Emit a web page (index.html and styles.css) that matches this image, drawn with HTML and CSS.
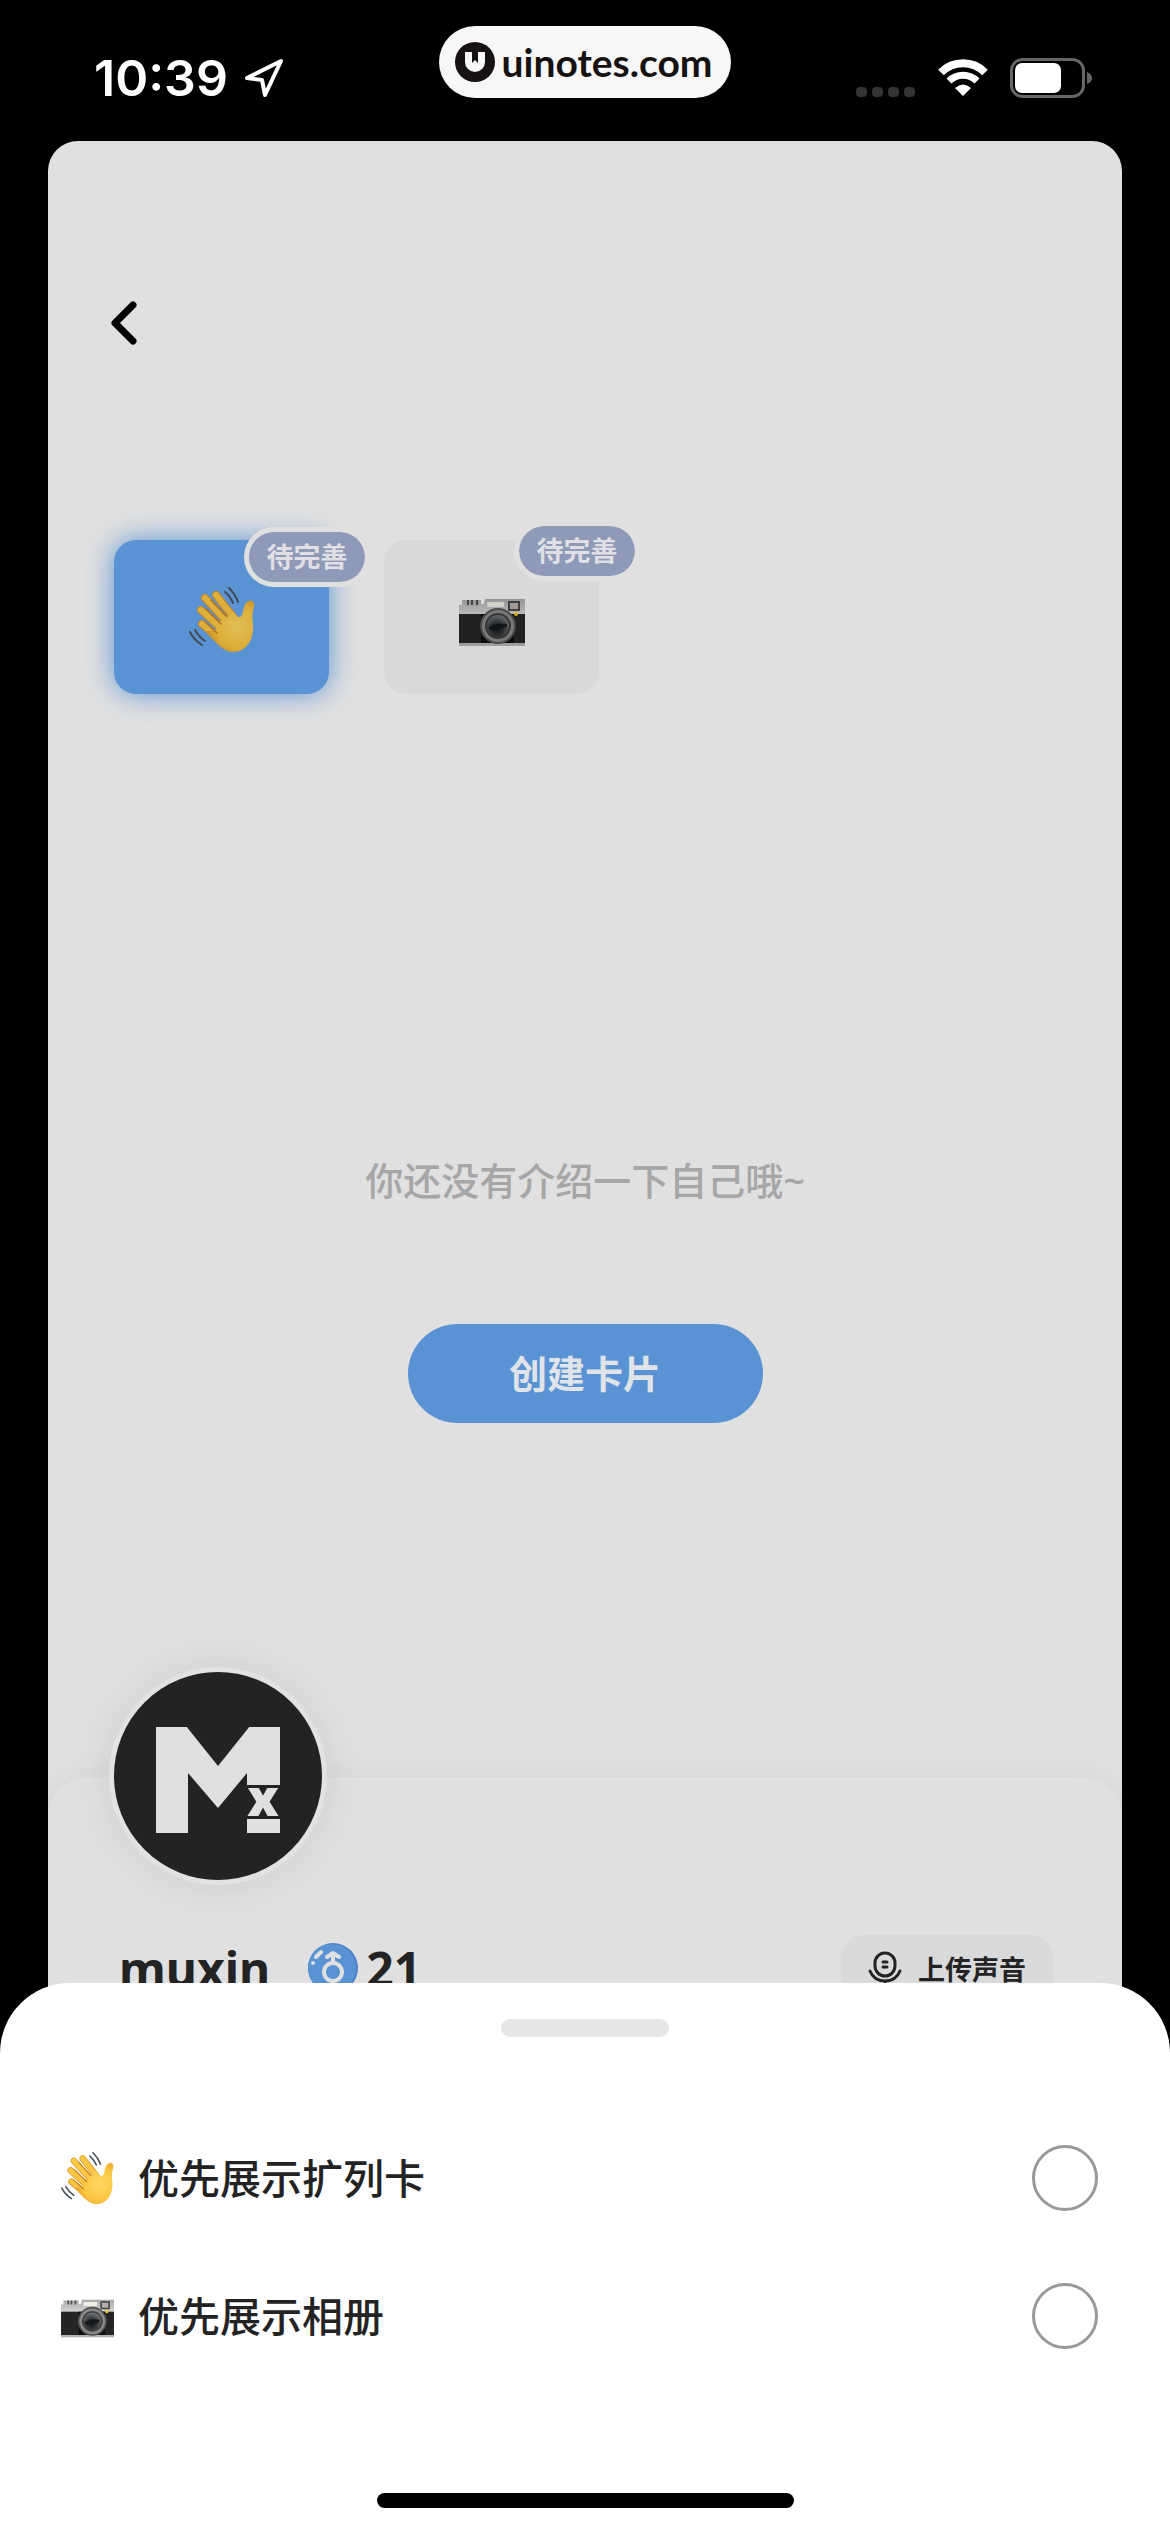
FILE: index.html
```
<!DOCTYPE html>
<html lang="zh-CN">
<head>
    <meta charset="utf-8">
    <meta name="viewport" content="width=device-width, initial-scale=1">
    <title>个人卡片</title>
    <link rel="stylesheet" href="styles.css">
</head>
<body>
    <!-- Общие иконки -->
    <svg class="sprite" aria-hidden="true">
        <defs>
            <radialGradient id="skin" cx="0.65" cy="0.5" r="0.6">
                <stop offset="0" stop-color="#ffd964"/>
                <stop offset="0.7" stop-color="#fbc540"/>
                <stop offset="1" stop-color="#e8a42c"/>
            </radialGradient>
            <linearGradient id="metal" x1="0" y1="0" x2="0" y2="1">
                <stop offset="0" stop-color="#a9a9a9"/>
                <stop offset="1" stop-color="#dadada"/>
            </linearGradient>
            <radialGradient id="glass" cx="0.45" cy="0.65" r="0.6">
                <stop offset="0" stop-color="#161819"/>
                <stop offset="0.5" stop-color="#33373a"/>
                <stop offset="1" stop-color="#6b6f71"/>
            </radialGradient>
        </defs>
        <symbol id="wave" viewBox="0 0 66 66">
            <g fill="none" stroke="#dd982a" stroke-width="8" stroke-linecap="round">
                <path d="M13 37 31 52"/>
                <path d="M12 23 34 43"/>
                <path d="M16 11 38 35"/>
                <path d="M27 8 46 32"/>
            </g>
            <g fill="none" stroke="#fcc843" stroke-width="6" stroke-linecap="round">
                <path d="M13 37 31 52"/>
                <path d="M12 23 34 43"/>
                <path d="M16 11 38 35"/>
                <path d="M27 8 46 32"/>
            </g>
            <path fill="url(#skin)" d="M43 24 48 29C51 32 53 29 54 25 55 20 56 15 60 14 64 13 66 16 65 20 63 26 63 31 64 38 65 53 57 65 44 65 35 65 28 57 16 44L26 44 30 34 37 32Z"/>
            <g fill="none" stroke="#c98220" stroke-width="1.500" stroke-linecap="round">
                <path d="M16 35 28 46"/>
                <path d="M17 22 32 37"/>
                <path d="M22 13 37 29"/>
            </g>
            <g fill="none" stroke="#4c535b" stroke-width="2" stroke-linecap="round">
                <path d="M36 5Q41 9 44 16"/>
                <path d="M40 1Q46 7 49 15"/>
                <path d="M1 45Q5 53 13 58"/>
                <path d="M6 43Q10 50 16 54"/>
            </g>
        </symbol>
        <symbol id="camera" viewBox="0 -12 66 66">
            <path fill="url(#metal)" d="M0 6H3V1H22V5H25L26 0H66V17H0Z"/>
            <path fill="#4c4c4c" d="M8 1H10V6H8ZM12 1H14V6H12ZM17 1H19V6H17Z"/>
            <rect y="15" width="66" height="30" fill="#252525"/>
            <rect x="22" y="15" width="33" height="30" fill="#0c0c0c"/>
            <rect y="44" width="66" height="3" fill="#b4b4b4"/>
            <rect x="28" y="3" width="17" height="5" rx="1" fill="#efeee4"/>
            <rect x="49" y="2" width="12" height="10" fill="#484848"/>
            <rect x="51" y="4" width="8" height="6" fill="#b8aea7"/>
            <circle cx="39" cy="27" r="18" fill="#535353"/>
            <circle cx="39" cy="27" r="16" fill="#8a8a8a"/>
            <circle cx="39" cy="27" r="13" fill="#3d3d3d"/>
            <circle cx="39" cy="27" r="11" fill="url(#glass)"/>
            <path fill="#171819" d="M30 28Q36 23 48 25 49 29 41 30 36 33 30 30Z"/>
            <circle cx="57" cy="15" r="2" fill="#f3c925"/>
        </symbol>
    </svg>

    <div class="screen">
        <header class="status-bar">
            <div class="status-left">
                <span class="time">10:39</span>
                <svg width="40" height="40" viewBox="0 0 40 40" fill="none" stroke="#fff" stroke-width="4" stroke-linejoin="round">
                    <path d="M37 3 3 20 18 22 21 37Z"/>
                </svg>
            </div>
            <div class="brand">
                <svg width="40" height="40" viewBox="0 0 40 40">
                    <circle cx="20" cy="20" r="20" fill="#161212"/>
                    <path fill="#f7f7f7" d="M10 10H17V21L20 18 23 21V10H30V20A10 10 0 0 1 10 20Z"/>
                </svg>
                <span>uinotes.com</span>
            </div>
            <div class="status-right">
                <svg class="signal" width="60" height="12" viewBox="0 0 60 12" fill="#333">
                    <rect y="1" width="11" height="10" rx="4"/>
                    <rect x="16" y="1" width="11" height="10" rx="4"/>
                    <rect x="32" y="1" width="11" height="10" rx="4"/>
                    <rect x="48" y="1" width="11" height="10" rx="4"/>
                </svg>
                <svg width="50" height="38" viewBox="0 0 50 38" fill="none" stroke="#fff">
                    <path stroke-width="8" d="M3 13.500A31 31 0 0 1 47 13.500"/>
                    <path stroke-width="7" d="M11 22A20 20 0 0 1 39 22"/>
                    <path fill="#fff" stroke="none" d="M25 37 17 29Q25 22 33 29Z"/>
                </svg>
                <svg width="82" height="40" viewBox="0 0 82 40">
                    <rect x="1.500" y="1.500" width="72" height="37" rx="11" fill="none" stroke="#666" stroke-width="3"/>
                    <rect x="5" y="5" width="46" height="30" rx="7" fill="#fff"/>
                    <path fill="#666" d="M77 14Q82 16 82 20 82 24 77 26Z"/>
                </svg>
            </div>
        </header>

        <main class="card">
            <button class="back-btn" type="button" aria-label="返回">
                <svg width="26" height="44" viewBox="0 0 26 44" fill="none" stroke="#000" stroke-width="7" stroke-linecap="round" stroke-linejoin="round">
                    <path d="M22 4 4 22 22 40"/>
                </svg>
            </button>

            <nav class="tabs">
                <button class="tab active" type="button" aria-label="扩列卡">
                    <svg class="emoji" width="66" height="66"><use href="#wave"/></svg>
                    <span class="badge">待完善</span>
                </button>
                <button class="tab" type="button" aria-label="相册">
                    <svg class="emoji" width="66" height="66"><use href="#camera"/></svg>
                    <span class="badge">待完善</span>
                </button>
            </nav>

            <section class="empty">
                <p>你还没有介绍一下自己哦~</p>
                <button class="create-btn" type="button">创建卡片</button>
            </section>

            <section class="profile">
                <div class="avatar">
                    <svg width="208" height="208" viewBox="0 0 208 208">
                        <rect x="42" y="55" width="124" height="106" fill="#e0e0e0"/>
                        <path fill="#232323" d="M72 54H136L104 94Z"/>
                        <path fill="#232323" d="M74 162V101L104 136 133 101V162Z"/>
                        <rect x="132" y="113" width="36" height="49" fill="#232323"/>
                        <rect x="133" y="147" width="33" height="14" fill="#e0e0e0"/>
                        <text class="mono-x" x="149" y="144" text-anchor="middle">x</text>
                    </svg>
                </div>
                <div class="profile-row">
                    <h1 class="name">muxin</h1>
                    <div class="age">
                        <svg width="50" height="50" viewBox="0 0 50 50">
                            <circle cx="25" cy="25" r="25" fill="#4a82cc"/>
                            <circle cx="24" cy="25" r="24" fill="#5a93d4"/>
                            <g fill="none" stroke="#e0e0e0" stroke-width="4" stroke-linecap="round" stroke-linejoin="round">
                                <circle cx="25" cy="29" r="9"/>
                                <path d="M25 19V10M19 14 25 10 31 14"/>
                                <path d="M8 14 13 9M5 20V20"/>
                            </g>
                        </svg>
                        <span>21</span>
                    </div>
                    <button class="voice-btn" type="button">
                        <svg width="34" height="38" viewBox="0 0 34 38" fill="none" stroke="#232323" stroke-width="3" stroke-linecap="round">
                            <rect x="7" y="4" width="20" height="23" rx="10"/>
                            <path d="M15 13H19M15 18H19M2 22Q6 32 17 32 28 32 32 22M17 32V36"/>
                        </svg>
                        上传声音
                    </button>
                </div>
            </section>
        </main>
    </div>

    <form class="sheet">
        <div class="handle"></div>
        <label class="option">
            <svg width="53" height="53"><use href="#wave"/></svg>
            <span>优先展示扩列卡</span>
            <input type="radio" name="priority" value="card">
        </label>
        <label class="option">
            <svg width="53" height="53"><use href="#camera"/></svg>
            <span>优先展示相册</span>
            <input type="radio" name="priority" value="album">
        </label>
        <div class="home-bar"></div>
    </form>
</body>
</html>
```
FILE: styles.css
```
:root {
    --surface: #e0e0e0;
    --primary: #5a93d4;
    --badge: #8e9ab8;
    --text: #232323;
}

* {
    box-sizing: border-box;
    margin: 0;
    padding: 0;
}

body {
    font-family: "Noto Sans", "Noto Sans CJK SC", sans-serif;
    color: var(--text);
    background: #000;
}

button {
    border: none;
    background: none;
    color: inherit;
    font-family: inherit;
    cursor: pointer;
}

svg {
    display: block;
    flex-shrink: 0;
}

.sprite {
    position: absolute;
    width: 0;
    height: 0;
}

.screen {
    display: flex;
    flex-direction: column;
    height: 100vh;
    overflow: hidden;
}

/* Строка состояния */
.status-bar {
    display: grid;
    grid-template-columns: 1fr auto 1fr;
    flex-shrink: 0;
    height: 141px;
    padding: 26px 78px 0;
}

.status-left,
.status-right {
    display: flex;
    align-items: center;
    height: 104px;
    color: #fff;
}

.status-left {
    gap: 16px;
    padding-left: 16px;
}

.status-right {
    justify-content: flex-end;
    gap: 22px;
}

.time {
    font-family: Inter, sans-serif;
    font-size: 50px;
    font-weight: 600;
}

.signal {
    align-self: flex-end;
    margin-bottom: 32px;
}

.brand {
    display: flex;
    align-items: center;
    gap: 6px;
    height: 72px;
    padding: 0 18px 0 16px;
    border-radius: 36px;
    background: #f7f7f7;
    color: #161212;
    font-family: Lato, sans-serif;
    font-size: 39px;
    font-weight: 700;
    line-height: 68px;
}

/* Карточка */
.card {
    display: flex;
    flex: 1;
    flex-direction: column;
    margin: 0 48px;
    padding-top: 160px;
    border-radius: 30px 30px 0 0;
    background: var(--surface);
    overflow: hidden;
}

.back-btn {
    align-self: flex-start;
    margin-left: 63px;
}

.tabs {
    display: flex;
    gap: 55px;
    margin: 195px 66px 0;
}

.tab {
    position: relative;
    display: flex;
    align-items: center;
    justify-content: center;
    width: 215px;
    height: 154px;
    border-radius: 22px;
    background: #d9d9d9;
}

.tab.active {
    background: var(--primary);
    box-shadow: 0 0 28px #5a93d4;
}

.tab .emoji {
    margin-top: 6px;
    filter: brightness(0.88);
}

.badge {
    position: absolute;
    top: -19px;
    left: 130px;
    width: 126px;
    border: 5px solid var(--surface);
    border-radius: 30px;
    background: var(--badge);
    background-clip: padding-box;
    color: #e0e0e4;
    font-size: 27px;
    font-weight: 700;
    line-height: 50px;
    text-align: center;
}

.tab.active .badge {
    top: -13px;
}

.empty {
    display: flex;
    flex-direction: column;
    align-items: center;
    gap: 116px;
    margin-top: 458px;
}

.empty p {
    color: #a6a6a6;
    font-size: 38px;
    font-weight: 500;
    line-height: 56px;
}

.create-btn {
    width: 355px;
    height: 99px;
    padding-bottom: 4px;
    border-radius: 50px;
    background: var(--primary);
    color: #e0e3e8;
    font-size: 38px;
    font-weight: 700;
}

.profile {
    flex: 1;
    margin-top: 354px;
    padding: 0 69px 0 61px;
    border-radius: 40px 40px 0 0;
    background: var(--surface);
    box-shadow: 0 0 30px rgba(0, 0, 0, 0.05);
}

.avatar {
    width: 218px;
    margin-top: -110px;
    border: 5px solid #e2e2e2;
    border-radius: 50%;
    background: #232323;
    box-shadow: 0 0 40px rgba(0, 0, 0, 0.08);
    overflow: hidden;
}

.mono-x {
    fill: #e0e0e0;
    font-family: "Noto Sans", sans-serif;
    font-size: 50px;
    font-weight: 900;
}

.profile-row {
    display: flex;
    align-items: center;
    height: 66px;
    margin-top: 50px;
    padding-left: 10px;
}

.name {
    font-size: 48px;
    font-weight: 700;
}

.age {
    display: flex;
    align-items: center;
    gap: 8px;
    margin-left: 38px;
    font-size: 48px;
    font-weight: 700;
}

.voice-btn {
    display: flex;
    align-items: center;
    gap: 16px;
    height: 66px;
    margin-left: auto;
    padding: 0 27px;
    border-radius: 22px;
    background: #d9dadc;
    font-size: 27px;
    font-weight: 700;
}

/* Нижняя панель поверх карточки */
.sheet {
    position: fixed;
    right: 0;
    bottom: 0;
    left: 0;
    padding: 36px 0 24px;
    border-radius: 70px 70px 0 0;
    background: #fff;
}

.handle {
    width: 168px;
    height: 18px;
    margin: 0 auto 72px;
    border-radius: 9px;
    background: #e6e6e6;
}

.option {
    display: flex;
    align-items: center;
    gap: 24px;
    height: 138px;
    padding: 0 72px 0 61px;
    font-size: 41px;
    font-weight: 500;
    cursor: pointer;
}

.option span {
    padding-bottom: 4px;
}

.option input {
    appearance: none;
    width: 66px;
    height: 66px;
    margin-left: auto;
    border: 3px solid #999;
    border-radius: 50%;
    background: #fff;
}

.option input:checked {
    border: 20px solid var(--primary);
}

.home-bar {
    width: 417px;
    height: 15px;
    margin: 108px auto 0;
    border-radius: 8px;
    background: #000;
}
```
